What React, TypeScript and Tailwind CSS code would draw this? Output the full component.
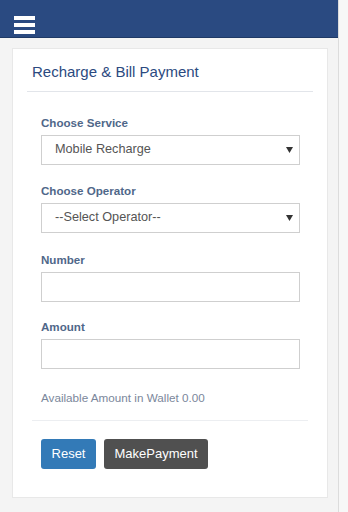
import React from "react";

const Label = ({ children }: { children: React.ReactNode }) => (
  <div className="text-[11.6px] leading-[17px] font-bold text-[#4f6789] mb-[4px]">{children}</div>
);

const Select = ({ value }: { value: string }) => (
  <div className="flex items-center justify-between h-[30px] w-[259px] border border-[#cfcfcf] bg-white pl-[13px] pr-[6px]">
    <span className="text-[12.7px] text-[#555]">{value}</span>
    <svg width="7" height="6" viewBox="0 0 7 6">
      <path d="M0 0h7L3.5 6z" fill="#333" />
    </svg>
  </div>
);

const Input = () => <div className="h-[30px] w-[259px] border border-[#cfcfcf] bg-white" />;

const App = () => {
  return (
    <div className="flex w-full h-[512px] bg-[#f7f7f7] font-['Liberation_Sans',Arial,sans-serif]">
      <div className="w-[339px] h-full bg-[#f4f4f4] border-r border-[#dcdcdc]">
        <div className="h-[38px] bg-[#2a4a81] border-b border-[#1f3a66] pl-[14px] pt-[16px]">
          <div className="flex flex-col gap-[3px] w-[21px]">
            <div className="h-[4px] bg-white" />
            <div className="h-[4px] bg-white" />
            <div className="h-[4px] bg-white" />
          </div>
        </div>

        <div className="mx-[12px] mt-[10px] w-[316px] h-[450px] bg-white border border-[#e8e8e8]">
          <div className="mx-[14px] border-b border-[#e2e5ea] pl-[5px] pt-[13px] pb-[9px]">
            <h1 className="text-[15px] leading-[20px] text-[#2b4a80]">Recharge &amp; Bill Payment</h1>
          </div>

          <div className="px-[28px] pt-[22px]">
            <Label>Choose Service</Label>
            <Select value="Mobile Recharge" />

            <div className="mt-[17px]">
              <Label>Choose Operator</Label>
              <Select value="--Select Operator--" />
            </div>

            <div className="mt-[18px]">
              <Label>Number</Label>
              <Input />
            </div>

            <div className="mt-[16px]">
              <Label>Amount</Label>
              <Input />
            </div>

            <p className="mt-[20px] text-[11.7px] leading-[17px] text-[#7b879b]">Available Amount in Wallet 0.00</p>
          </div>

          <div className="mx-[19px] mt-[14px] border-b border-[#eceef1]" />

          <div className="flex gap-[8px] px-[28px] pt-[18px]">
            <button className="h-[30px] w-[55px] rounded-[3px] bg-[#337ab7] text-[13px] text-white">Reset</button>
            <button className="h-[30px] w-[104px] rounded-[3px] bg-[#505050] text-[13px] text-white">MakePayment</button>
          </div>
        </div>
      </div>
    </div>
  );
};

export default App;
